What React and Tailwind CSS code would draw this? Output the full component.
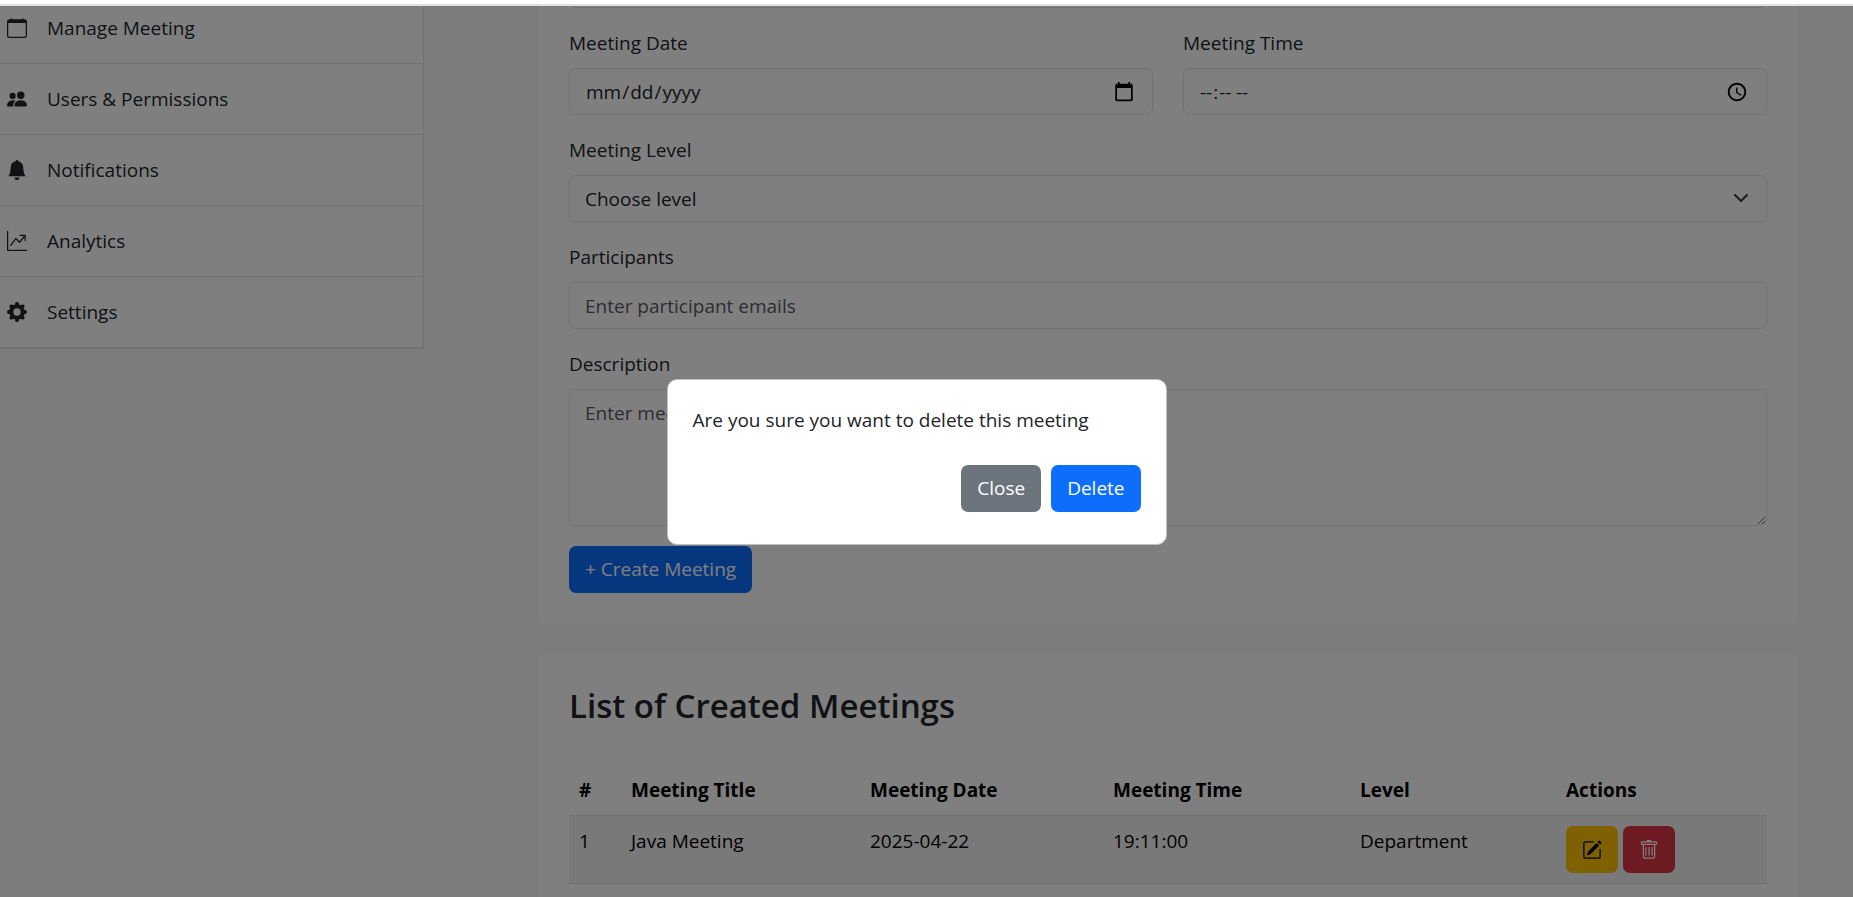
import React from "react";
import {
  BsCalendar,
  BsPeopleFill,
  BsBellFill,
  BsGraphUpArrow,
  BsGearFill,
  BsPencilSquare,
  BsTrash,
} from "react-icons/bs";

const navItems = [
  { label: "Manage Meeting", Icon: BsCalendar },
  { label: "Users & Permissions", Icon: BsPeopleFill },
  { label: "Notifications", Icon: BsBellFill },
  { label: "Analytics", Icon: BsGraphUpArrow },
  { label: "Settings", Icon: BsGearFill },
];

const meetings = [
  { id: 1, title: "Java Meeting", date: "2025-04-22", time: "19:11:00", level: "Department" },
];

const control =
  "block w-full h-[47px] rounded-[7px] border border-[#dee2e6] bg-white px-[15px] leading-[30px] text-[#212529] placeholder:text-[#595c5f]";

const pickerIcon = "[&::-webkit-calendar-picker-indicator]:size-[22px]";

function Field({ id, label, children }) {
  return (
    <div className="flex flex-col gap-[10px]">
      <label htmlFor={id} className="leading-[30px]">{label}</label>
      {children}
    </div>
  );
}

function Sidebar() {
  return (
    <nav className="-mt-[13px] w-[424px] shrink-0 self-start border-r border-b border-[#dee2e6] bg-white">
      <ul>
        {navItems.map(({ label, Icon }) => (
          <li key={label} className="border-b border-[#dee2e6]">
            <a href="#" className="flex h-[70px] items-center gap-[20px] pl-[7px]">
              <Icon className="size-5" />
              <span>{label}</span>
            </a>
          </li>
        ))}
      </ul>
    </nav>
  );
}

function MeetingForm() {
  return (
    <form className="flex flex-col gap-5 bg-white px-[30px] pb-[30px]">
      <input type="text" aria-label="Meeting Title" className={control} />
      <div className="grid grid-cols-2 gap-[30px]">
        <Field id="date" label="Meeting Date">
          <input id="date" type="date" className={control + " " + pickerIcon} />
        </Field>
        <Field id="time" label="Meeting Time">
          <input id="time" type="time" className={control + " " + pickerIcon} />
        </Field>
      </div>
      <Field id="level" label="Meeting Level">
        <div className="relative">
          <select id="level" className={control + " appearance-none"}>
            <option>Choose level</option>
          </select>
          <svg viewBox="0 0 16 16" className="pointer-events-none absolute top-[15px] right-[18px] size-4">
            <path fill="none" stroke="#343a40" strokeLinecap="round" strokeLinejoin="round" strokeWidth="2" d="m2 5 6 6 6-6" />
          </svg>
        </div>
      </Field>
      <Field id="people" label="Participants">
        <input id="people" type="text" placeholder="Enter participant emails" className={control} />
      </Field>
      <Field id="description" label="Description">
        <textarea
          id="description"
          placeholder="Enter meeting description"
          className="block h-[137px] w-full resize-y rounded-[7px] border border-[#dee2e6] bg-white px-[15px] py-[8px] leading-[30px] placeholder:text-[#595c5f]"
        />
      </Field>
      <button type="button" className="h-[47px] self-start rounded-[7px] bg-[#0d6efd] px-4 text-white">
        + Create Meeting
      </button>
    </form>
  );
}

function MeetingList() {
  return (
    <section className="bg-white p-[30px]">
      <h2 className="mb-[36px] text-[33px] leading-[46px] font-semibold">List of Created Meetings</h2>
      <table className="w-full table-fixed border-collapse text-left leading-[30px] text-black">
        <colgroup>
          <col className="w-[52px]" />
          <col className="w-[239px]" />
          <col className="w-[243px]" />
          <col className="w-[247px]" />
          <col className="w-[206px]" />
          <col className="w-[211px]" />
        </colgroup>
        <thead>
          <tr className="border-b border-[#dee2e6] font-bold">
            {["#", "Meeting Title", "Meeting Date", "Meeting Time", "Level", "Actions"].map((h) => (
              <th key={h} className="p-[10px]">{h}</th>
            ))}
          </tr>
        </thead>
        <tbody>
          {meetings.map((m) => (
            <tr key={m.id} className="border-b border-[#dee2e6] bg-[#f2f2f2] align-top">
              <td className="p-[10px]">{m.id}</td>
              <td className="p-[10px]">{m.title}</td>
              <td className="p-[10px]">{m.date}</td>
              <td className="p-[10px]">{m.time}</td>
              <td className="p-[10px]">{m.level}</td>
              <td className="p-[10px]">
                <div className="flex gap-[5px]">
                  <button type="button" aria-label="Edit" className="flex h-[47px] w-[52px] items-center justify-center rounded-[7px] bg-[#ffc107] text-black">
                    <BsPencilSquare className="size-5" />
                  </button>
                  <button type="button" aria-label="Delete" className="flex h-[47px] w-[52px] items-center justify-center rounded-[7px] bg-[#dc3545] text-white">
                    <BsTrash className="size-5" />
                  </button>
                </div>
              </td>
            </tr>
          ))}
        </tbody>
      </table>
    </section>
  );
}

function DeleteDialog() {
  return (
    <div className="absolute inset-0 flex items-start justify-center bg-black/50 pt-[373px] pr-5">
      <div
        role="dialog"
        aria-modal="true"
        className="flex w-[500px] flex-col gap-[30px] rounded-[10px] border border-[#bfbfbf] bg-white px-[25px] pt-[25px] pb-[32px]"
      >
        <p className="leading-[30px]">Are you sure you want to delete this meeting</p>
        <div className="flex justify-end gap-[10px]">
          <button type="button" className="h-[47px] rounded-[7px] bg-[#6c757d] px-4 text-white">Close</button>
          <button type="button" className="h-[47px] rounded-[7px] bg-[#0d6efd] px-4 text-white">Delete</button>
        </div>
      </div>
    </div>
  );
}

export default function App() {
  return (
    <div className="flex h-screen flex-col overflow-hidden bg-[#f8f8f8] font-['Open_Sans',sans-serif] text-[19px] text-[#212529]">
      <header className="h-[6px] shrink-0 border-b-2 border-[#dfe2e1] bg-white" />
      <div className="relative flex min-h-0 flex-1 overflow-hidden">
        <Sidebar />
        <main className="-mt-[45px] flex min-w-0 flex-1 flex-col gap-[30px] pr-[56px] pl-[115px]">
          <MeetingForm />
          <MeetingList />
        </main>
        <DeleteDialog />
      </div>
    </div>
  );
}
